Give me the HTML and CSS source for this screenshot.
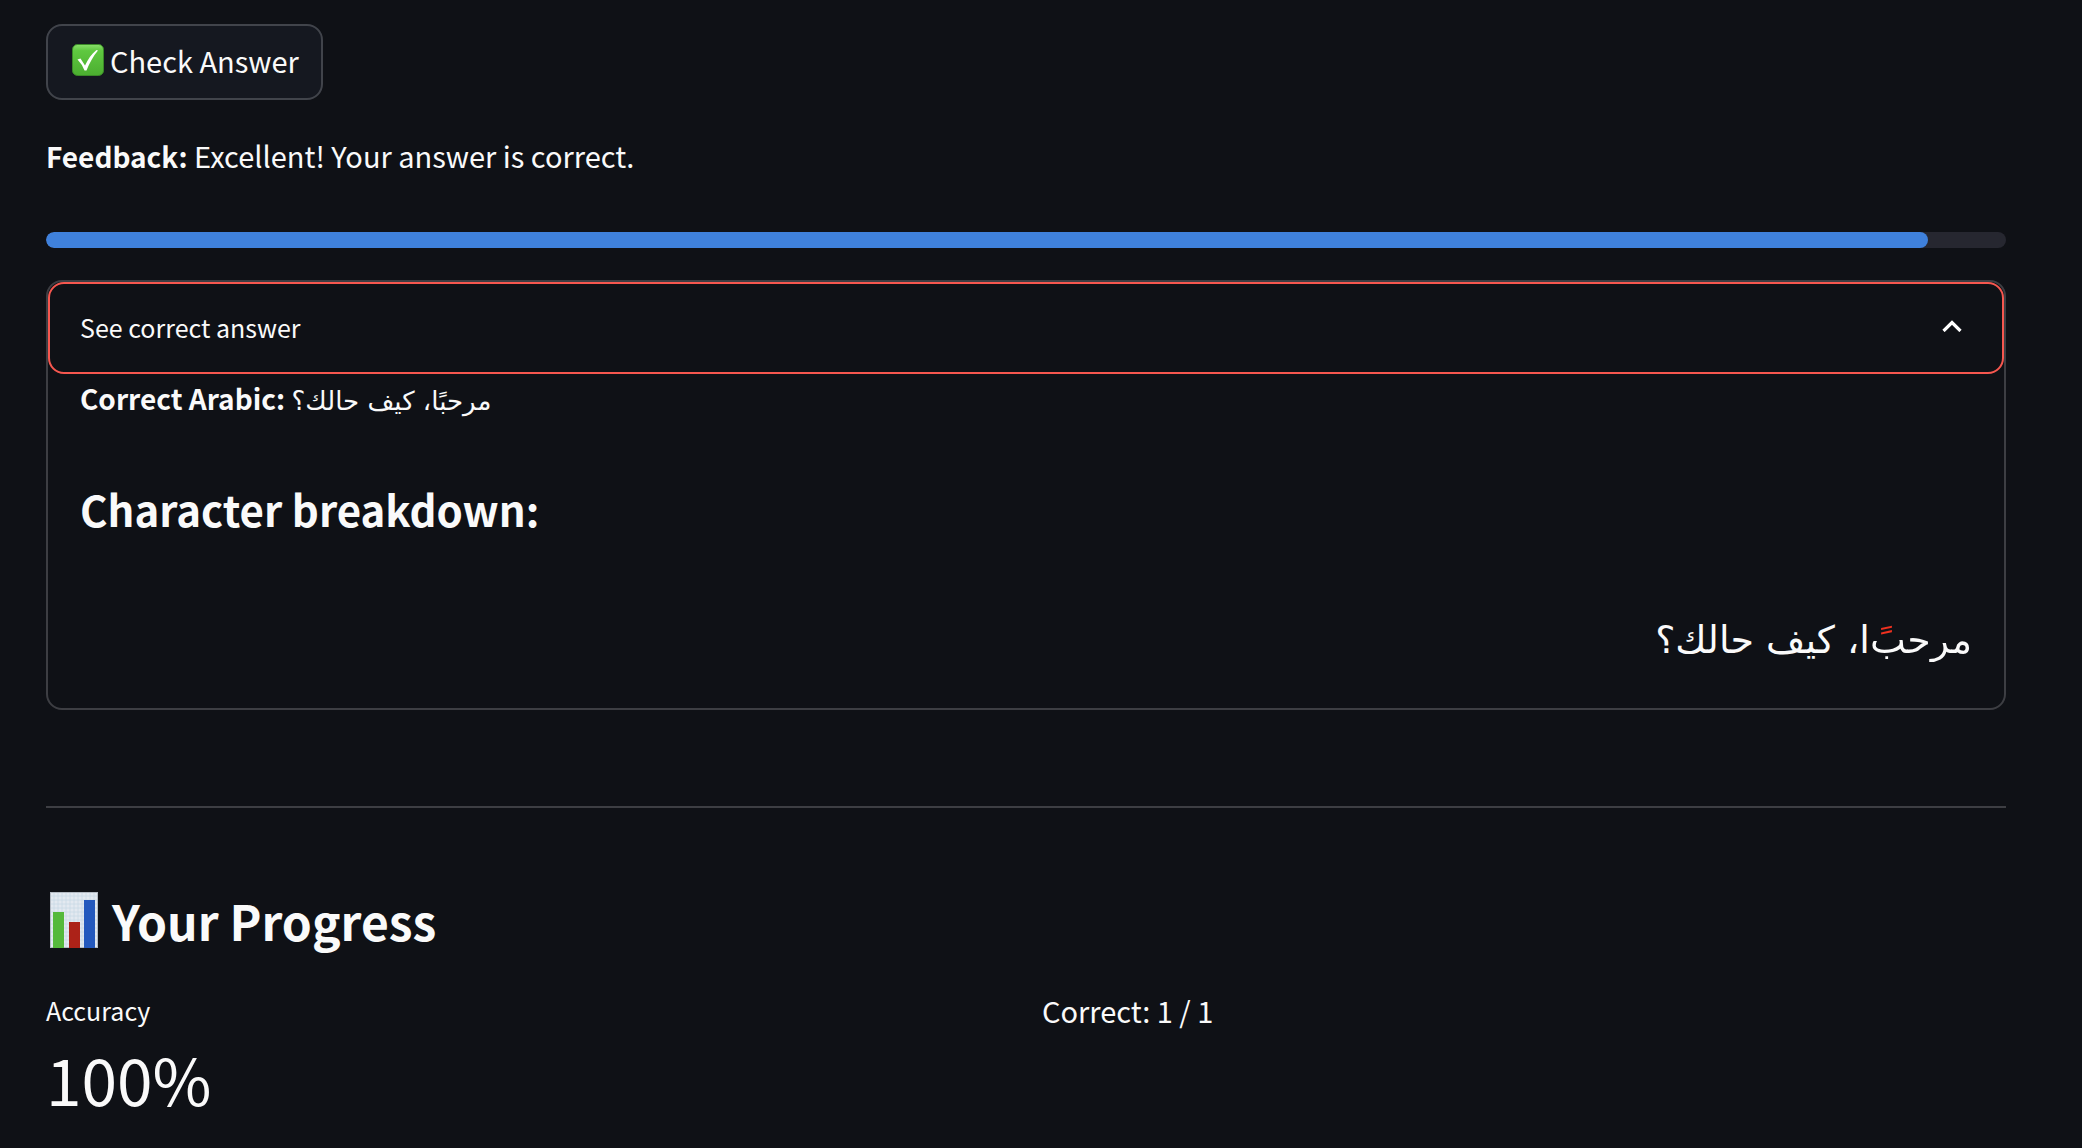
FILE: index.html
```html
<!DOCTYPE html>
<html lang="en">
<head>
<meta charset="utf-8">
<meta name="viewport" content="width=device-width, initial-scale=1">
<title>Arabic practice</title>
<link rel="stylesheet" href="styles.css">
</head>
<body>
<main class="page">
  <button class="check-button" type="button">
    <svg class="check-icon" viewBox="0 0 32 32" aria-hidden="true">
      <defs>
        <linearGradient id="tile" x1="0" y1="0" x2="0" y2="1">
          <stop offset="0" stop-color="#8be06c"/>
          <stop offset=".2" stop-color="#5fc840"/>
          <stop offset="1" stop-color="#4bae30"/>
        </linearGradient>
      </defs>
      <rect x=".5" y=".5" width="31" height="31" rx="5" fill="url(#tile)" stroke="#3a8a27"/>
      <path d="M5.500 15.500 8.500 14.500 13 21.500C16 15 19.500 10 24.500 6L26 6.500C21 12.500 17.500 19 14.500 26.500L12.500 26.500Q10 20 5.500 15.500Z" fill="#fff"/>
    </svg>
    <span>Check Answer</span>
  </button>

  <p class="feedback"><strong>Feedback:</strong> Excellent! Your answer is correct.</p>

  <progress class="score" value="96" max="100" aria-label="Answer score"></progress>

  <details class="expander" open>
    <summary class="expander-head">
      <span>See correct answer</span>
      <svg class="chevron" viewBox="0 0 20 12" aria-hidden="true"><path d="M1.500 11 10 2.500 18.500 11" fill="none" stroke="#fff" stroke-width="3.200"/></svg>
    </summary>
    <div class="expander-body">
      <p><strong>Correct Arabic:</strong> <bdi class="arabic" lang="ar">مرحبًا، كيف حالك؟</bdi></p>
      <h3 class="subheading">Character breakdown:</h3>
      <p class="breakdown" lang="ar" dir="rtl"><span class="missed-mark">مرحبً</span><span class="letter">ا</span>، كيف حالك؟</p>
    </div>
  </details>

  <hr class="divider">

  <h2 class="heading">
    <svg class="chart-icon" viewBox="0 0 48 56" aria-hidden="true">
      <rect width="48" height="56" fill="#e3e9f0"/>
      <path d="M0 4H48M0 8H48M0 12H48M0 16H48M0 20H48M0 24H48M0 28H48M0 32H48M0 36H48M0 40H48M0 44H48M0 48H48M0 52H48M4 0V56M8 0V56M12 0V56M16 0V56M20 0V56M24 0V56M28 0V56M32 0V56M36 0V56M40 0V56M44 0V56" stroke="#c9d9e6" stroke-width=".8"/>
      <rect x=".5" y=".5" width="47" height="55" fill="none" stroke="#b4bbc3"/>
      <path d="M3 20H14V56H3Z" fill="#55b93b"/>
      <path d="M19 30H30V56H19Z" fill="#ac2218"/>
      <path d="M34 8H45V56H34Z" fill="#2459bd"/>
    </svg>
    <span>Your Progress</span>
  </h2>

  <section class="stats">
    <div>
      <p class="metric-label">Accuracy</p>
      <p class="metric-value">100%</p>
    </div>
    <p>Correct: 1 / 1</p>
  </section>
</main>
</body>
</html>
```
FILE: styles.css
```css
* {
  box-sizing: border-box;
}

body {
  margin: 0;
  background: #0f1116;
  color: #fafafa;
  font-family: "Noto Sans CJK SC", "Noto Sans", sans-serif;
  font-size: 29px;
  line-height: 46px;
}

p,
h2,
h3 {
  margin: 0;
}

strong {
  font-size: 28px;
}

.page {
  display: flex;
  flex-direction: column;
  padding: 24px 76px 24px 46px;
}

.check-button {
  display: flex;
  align-items: center;
  align-self: flex-start;
  gap: 6px;
  height: 76px;
  padding: 0 22px 4px 24px;
  border: 2px solid #41444b;
  border-radius: 16px;
  background: #151820;
  color: inherit;
  font: inherit;
}

.check-icon {
  width: 32px;
  height: 32px;
}

.feedback {
  margin-top: 32px;
}

.score {
  appearance: none;
  display: block;
  width: 100%;
  height: 16px;
  margin: 53px 0 32px;
  border: 0;
  border-radius: 8px;
  background: #262730;
  overflow: hidden;
}

.score::-webkit-progress-bar {
  background: #262730;
}

.score::-webkit-progress-value {
  border-radius: 8px;
  background: #3f81dc;
}

.expander {
  border: 2px solid #3d3e43;
  border-radius: 16px;
}

.expander-head {
  display: flex;
  align-items: center;
  justify-content: space-between;
  height: 92px;
  padding: 0 40px 2px 30px;
  border: 2px solid #f6574f;
  border-radius: 16px;
  font-size: 25px;
  list-style: none;
}

.chevron {
  width: 20px;
  height: 12px;
  margin-bottom: 2px;
}

.expander-body {
  padding: 0 32px 30px;
}

.arabic {
  font-family: "DejaVu Sans", sans-serif;
  font-size: 26px;
}

.subheading {
  margin: 55px 0 63px;
  font-size: 42px;
  line-height: 60px;
}

.breakdown {
  font-family: "DejaVu Sans", sans-serif;
  font-size: 38px;
  line-height: 76px;
}

/* The vowel mark sits above the letters, so only the top of the word is red. */
.missed-mark {
  background: linear-gradient(#f0311f 19px, #fafafa 19px);
  background-clip: text;
  color: transparent;
}

.letter {
  display: inline-block;
}

.divider {
  width: 100%;
  height: 2px;
  margin: 96px 0 74px;
  border: 0;
  background: #3d3e43;
}

.heading {
  display: flex;
  align-items: center;
  gap: 14px;
  padding-left: 4px;
  font-size: 48px;
  line-height: 76px;
}

.chart-icon {
  width: 48px;
  height: 56px;
}

.stats {
  display: grid;
  grid-template-columns: 1fr 1fr;
  gap: 32px;
  margin-top: 29px;
}

.metric-label {
  font-size: 25px;
}

.metric-value {
  font-size: 64px;
  line-height: 90px;
}
```
